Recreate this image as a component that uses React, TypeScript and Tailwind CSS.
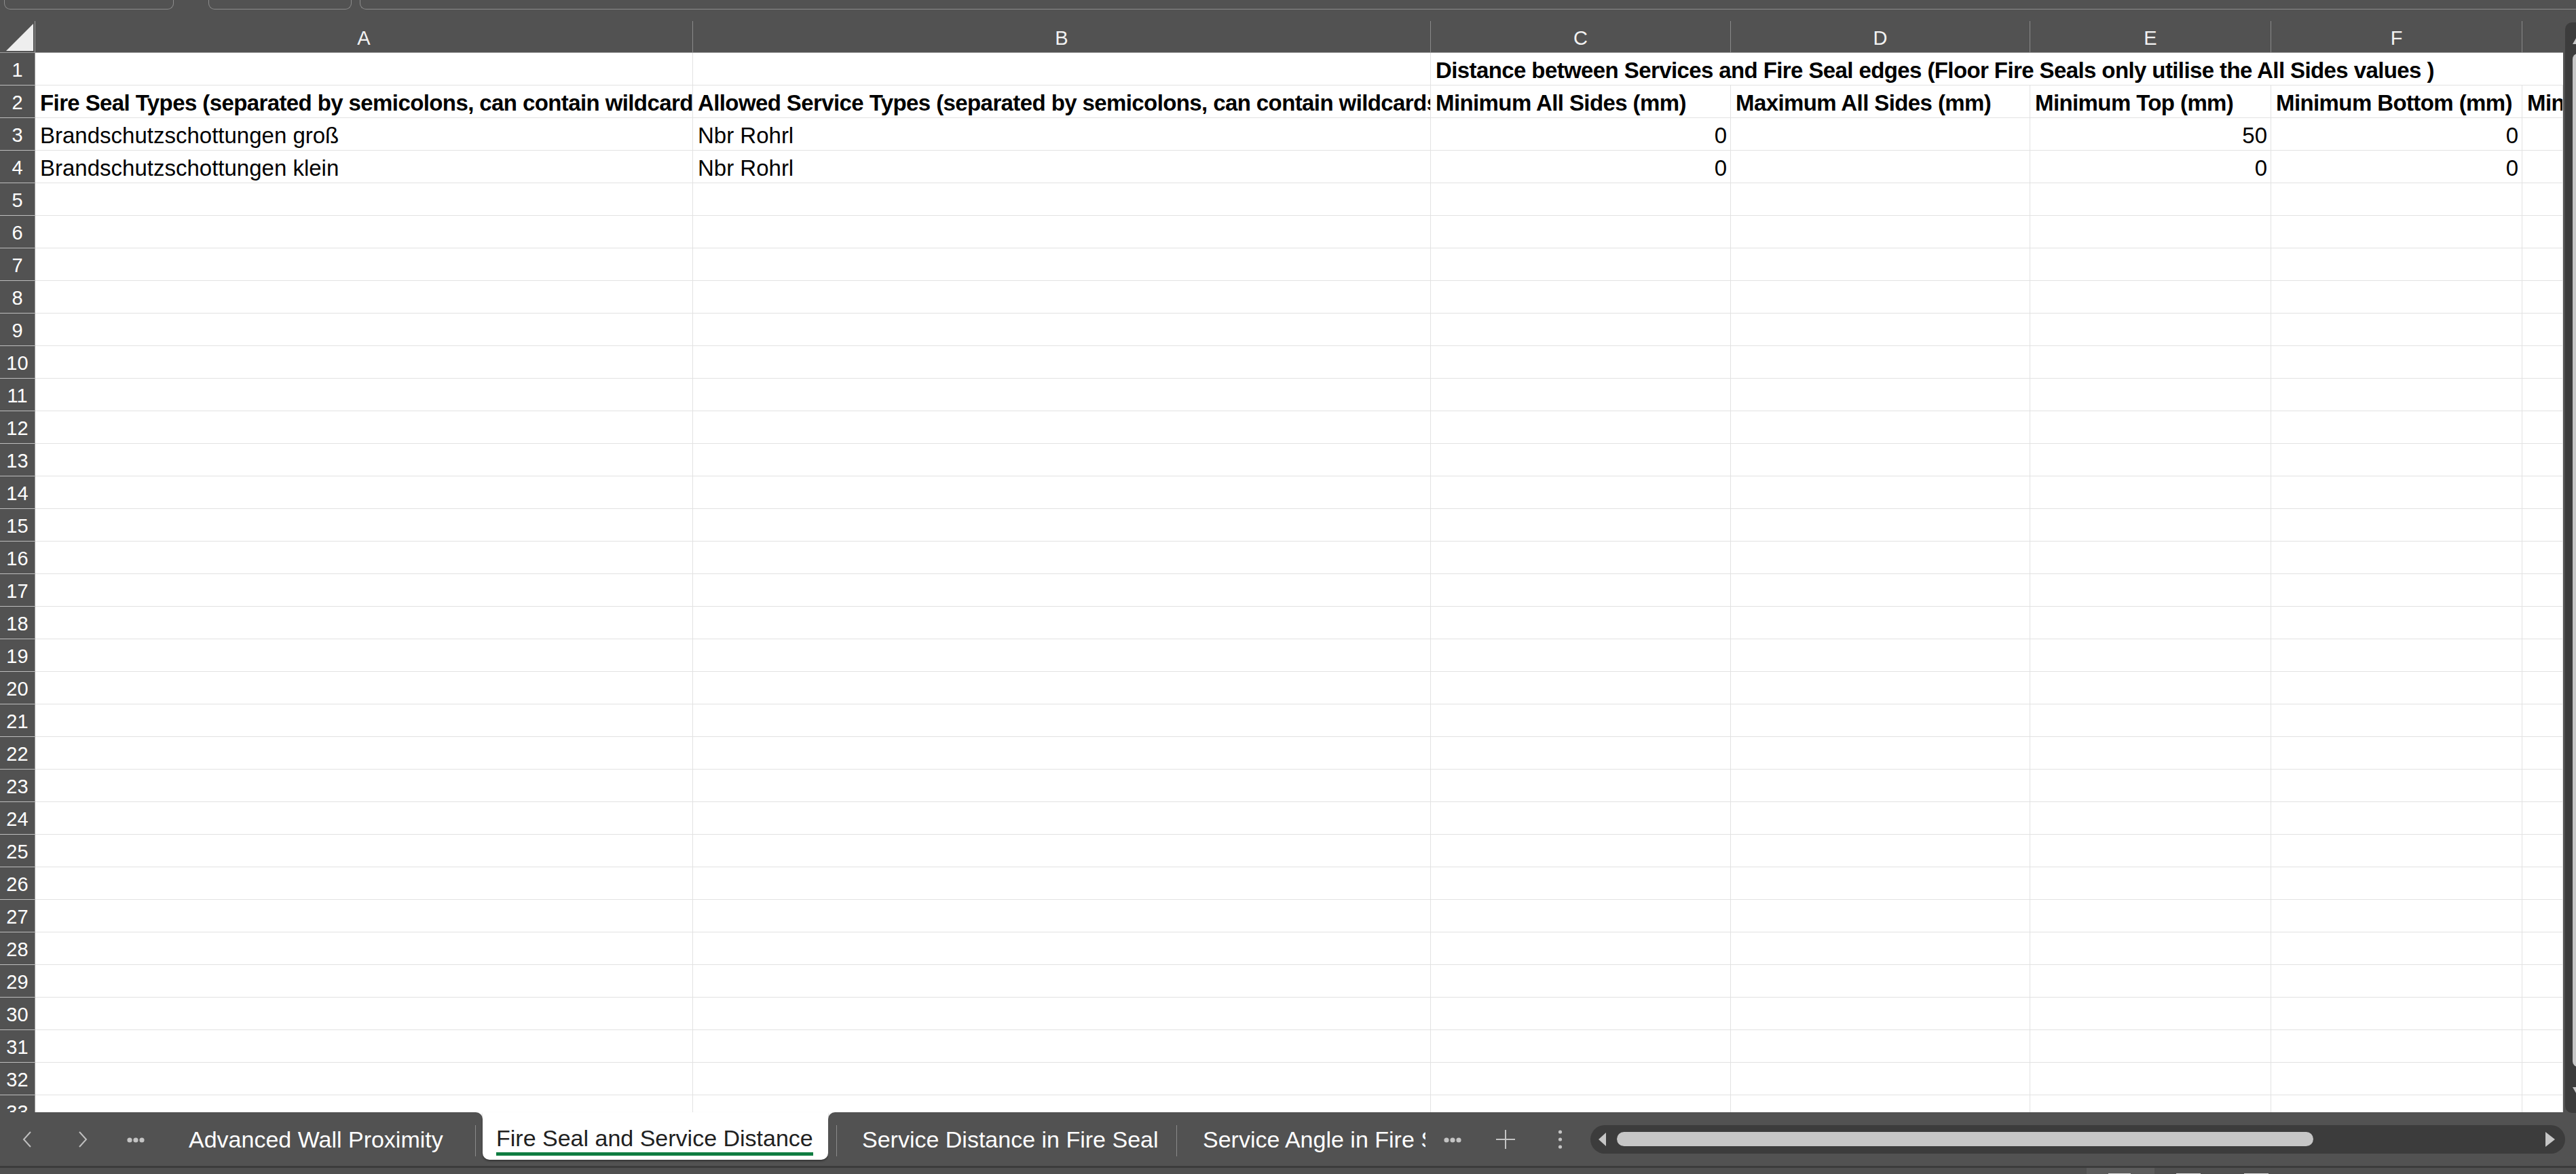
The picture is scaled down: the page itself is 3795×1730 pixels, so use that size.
import React from "react";

const COLS = [969, 1087, 442, 441, 355, 370];
const LETTERS = ["A", "B", "C", "D", "E", "F"];
const ROWS = 33;

type CellProps = { w?: number; children?: React.ReactNode; bold?: boolean; right?: boolean; grow?: boolean };

function Cell({ w, children, bold, right, grow }: CellProps) {
  return (
    <div
      style={grow ? undefined : { width: w }}
      className={`${grow ? "flex-1 min-w-0" : "shrink-0"} h-full border-r border-b border-[#e2e2e2] overflow-hidden whitespace-nowrap flex items-center pt-[5px] px-[7px] text-[33px] text-black ${bold ? "font-bold tracking-[-0.6px]" : ""} ${right ? "justify-end pr-[5px]" : ""}`}
    >
      {children}
    </div>
  );
}

function RowHeader({ n }: { n: number }) {
  return (
    <div className="w-[52px] shrink-0 h-full bg-[#525252] border-r border-[#9a9a9a] border-b border-b-[#bdbdbd] flex items-center justify-center pt-[5px] text-[29px] text-white">
      {n}
    </div>
  );
}

function Row({ n }: { n: number }) {
  let cells: React.ReactNode;
  if (n === 1) {
    cells = (
      <>
        <Cell w={COLS[0]} />
        <Cell w={COLS[1]} />
        <div className="flex-1 min-w-0 h-full border-b border-[#e2e2e2] overflow-hidden whitespace-nowrap flex items-center pt-[5px] px-[7px] text-[33px] font-bold tracking-[-0.6px] text-black">
          Distance between Services and Fire Seal edges (Floor Fire Seals only utilise the All Sides values )
        </div>
      </>
    );
  } else if (n === 2) {
    cells = (
      <>
        <Cell w={COLS[0]} bold>Fire Seal Types (separated by semicolons, can contain wildcards)</Cell>
        <Cell w={COLS[1]} bold>Allowed Service Types (separated by semicolons, can contain wildcards)</Cell>
        <Cell w={COLS[2]} bold>Minimum All Sides (mm)</Cell>
        <Cell w={COLS[3]} bold>Maximum All Sides (mm)</Cell>
        <Cell w={COLS[4]} bold>Minimum Top (mm)</Cell>
        <Cell w={COLS[5]} bold>Minimum Bottom (mm)</Cell>
        <Cell grow bold>Minimum Left (mm)</Cell>
      </>
    );
  } else if (n === 3 || n === 4) {
    cells = (
      <>
        <Cell w={COLS[0]}>{n === 3 ? "Brandschutzschottungen groß" : "Brandschutzschottungen klein"}</Cell>
        <Cell w={COLS[1]}>Nbr Rohrl</Cell>
        <Cell w={COLS[2]} right>0</Cell>
        <Cell w={COLS[3]} />
        <Cell w={COLS[4]} right>{n === 3 ? "50" : "0"}</Cell>
        <Cell w={COLS[5]} right>0</Cell>
        <Cell grow />
      </>
    );
  } else {
    cells = (
      <>
        {COLS.map((w, i) => (
          <Cell key={i} w={w} />
        ))}
        <Cell grow />
      </>
    );
  }
  return (
    <div className="flex h-[48px] shrink-0">
      <RowHeader n={n} />
      {cells}
    </div>
  );
}

function ChevronLeft() {
  return (
    <svg width="14" height="24" viewBox="0 0 14 24" className="shrink-0">
      <polyline points="12,1 2,12 12,23" fill="none" stroke="#bfbfbf" strokeWidth="2" />
    </svg>
  );
}
function ChevronRight() {
  return (
    <svg width="14" height="24" viewBox="0 0 14 24" className="shrink-0">
      <polyline points="2,1 12,12 2,23" fill="none" stroke="#bfbfbf" strokeWidth="2" />
    </svg>
  );
}
function Dots() {
  return (
    <svg width="26" height="10" viewBox="0 0 26 10" className="shrink-0">
      <circle cx="4" cy="5" r="3.6" fill="#c4c4c4" />
      <circle cx="13" cy="5" r="3.6" fill="#c4c4c4" />
      <circle cx="22" cy="5" r="3.6" fill="#c4c4c4" />
    </svg>
  );
}

export default function App() {
  return (
    <div className="w-[3795px] h-[1730px] overflow-hidden bg-[#525252] font-['Liberation_Sans',Arial,sans-serif] flex flex-col">
      {/* top strip (formula bar remnants) */}
      <div className="h-[31px] shrink-0 flex items-start bg-[#525252]">
        <div className="ml-[6px] w-[250px] h-[14px] border border-t-0 border-[#8c8c8c] rounded-b-[9px]" />
        <div className="ml-[51px] w-[211px] h-[14px] border border-t-0 border-[#8c8c8c] rounded-b-[9px]" />
        <div className="ml-[12px] flex-1 h-[14px] border border-t-0 border-r-0 border-[#8c8c8c] rounded-bl-[9px]" />
      </div>

      {/* main area */}
      <div className="h-[1608px] shrink-0 flex">
        <div className="w-[3776px] shrink-0 h-full overflow-hidden bg-white flex flex-col">
          {/* column headers */}
          <div className="flex h-[47px] shrink-0 bg-[#525252] border-b border-[#a0a0a0]">
            <div className="w-[52px] shrink-0 h-full border-r border-[#9a9a9a] relative">
              <svg width="52" height="47" viewBox="0 0 52 47" className="block">
                <polygon points="49,4 49,44 9,44" fill="#eeeeee" />
              </svg>
            </div>
            {COLS.map((w, i) => (
              <div
                key={i}
                style={{ width: w }}
                className="shrink-0 h-full border-r border-[#8a8a8a] flex items-center justify-center pt-[5px] text-[29px] text-[#f2f2f2]"
              >
                {LETTERS[i]}
              </div>
            ))}
            <div className="flex-1 h-full flex items-center justify-center pt-[5px] text-[29px] text-[#f2f2f2]" />
          </div>
          {Array.from({ length: ROWS }, (_, i) => (
            <Row key={i} n={i + 1} />
          ))}
        </div>
        {/* vertical scrollbar */}
        <div className="flex-1 ml-[3px] mt-[2px] h-[1607px] bg-[#3c3c3c] rounded-tl-[10px] rounded-bl-[10px] flex flex-col relative">
          <svg width="8" height="14" viewBox="0 0 8 14" className="ml-[11px] mt-[18px] shrink-0">
            <polygon points="0,14 8,0 8,14" fill="#c6c6c6" />
          </svg>
          <div className="ml-[11px] mt-[14px] h-[1493px] bg-[#c6c6c6] rounded-tl-[8px] rounded-bl-[8px]" />
          <svg width="8" height="14" viewBox="0 0 8 14" className="ml-[11px] mt-[30px] shrink-0">
            <polygon points="0,0 8,0 8,14" fill="#c6c6c6" />
          </svg>
        </div>
      </div>

      {/* sheet tabs bar */}
      <div className="h-[79px] shrink-0 flex bg-white">
        <div className="w-[711px] shrink-0 h-full bg-[#525252] rounded-tr-[10px] flex items-center">
          <div className="ml-[33px]">
            <ChevronLeft />
          </div>
          <div className="ml-[68px]">
            <ChevronRight />
          </div>
          <div className="ml-[58px] pt-[2px]">
            <Dots />
          </div>
          <div className="ml-[65px] w-[422px] shrink-0 whitespace-nowrap text-[34px] text-white pt-[2px]">
            Advanced Wall Proximity
          </div>
          <div className="w-px h-[46px] bg-[#8a8a8a] shrink-0 mt-[4px]" />
        </div>
        <div className="w-[509px] shrink-0 h-full bg-[#525252]">
          <div className="h-[70px] bg-white rounded-b-[10px] shadow-[0_2px_3px_rgba(0,0,0,0.35)] pl-[20px] pt-[19px]">
            <div className="inline-flex flex-col">
              <span className="text-[34px] leading-[38px] text-[#212121] whitespace-nowrap">Fire Seal and Service Distance</span>
              <span className="h-[5px] bg-[#107c41] mt-[2px]" />
            </div>
          </div>
        </div>
        <div className="flex-1 h-full bg-[#525252] rounded-tl-[10px] flex items-center">
          <div className="ml-[12px] w-px h-[46px] bg-[#8a8a8a] shrink-0 mt-[4px]" />
          <div className="ml-[37px] w-[463px] shrink-0 whitespace-nowrap text-[34px] text-white pt-[2px]">
            Service Distance in Fire Seal
          </div>
          <div className="w-px h-[46px] bg-[#8a8a8a] shrink-0 mt-[4px]" />
          <div className="ml-[38px] w-[328px] shrink-0 overflow-hidden whitespace-nowrap text-[34px] text-white pt-[2px]">
            Service Angle in Fire Seal
          </div>
          <div className="ml-[27px] pt-[2px]">
            <Dots />
          </div>
          <svg width="30" height="30" viewBox="0 0 30 30" className="ml-[50px] shrink-0">
            <line x1="15" y1="1" x2="15" y2="29" stroke="#c4c4c4" strokeWidth="2" />
            <line x1="1" y1="15" x2="29" y2="15" stroke="#c4c4c4" strokeWidth="2" />
          </svg>
          <svg width="11" height="30" viewBox="0 0 11 30" className="ml-[60px] shrink-0">
            <circle cx="5.5" cy="4" r="2.6" fill="#c4c4c4" />
            <circle cx="5.5" cy="15" r="2.6" fill="#c4c4c4" />
            <circle cx="5.5" cy="26" r="2.6" fill="#c4c4c4" />
          </svg>
          <div className="ml-[39px] w-[1436px] h-[42px] shrink-0 bg-[#3c3c3c] rounded-full flex items-center">
            <svg width="14" height="20" viewBox="0 0 14 20" className="ml-[10px] shrink-0">
              <polygon points="13,0 13,20 2,10" fill="#c6c6c6" />
            </svg>
            <div className="ml-[15px] w-[1026px] h-[21px] bg-[#c6c6c6] rounded-full" />
            <svg width="16" height="22" viewBox="0 0 16 22" className="ml-[341px] shrink-0">
              <polygon points="1,0 1,22 15,11" fill="#c6c6c6" />
            </svg>
          </div>
        </div>
      </div>
      <div className="h-[3px] shrink-0 bg-[#3c3c3c]" />
      {/* status bar */}
      <div className="flex-1 bg-[#505050] flex">
        <div className="ml-[3074px] w-[100px] h-full bg-[#5c5c5c] relative flex">
          <div className="ml-[32px] mt-[8px] w-[33px] h-[3px] bg-[#d9d9d9]" />
        </div>
        <div className="ml-[32px] mt-[8px] w-[36px] h-[3px] bg-[#d9d9d9]" />
        <div className="ml-[64px] mt-[8px] w-[36px] h-[3px] bg-[#d9d9d9]" />
      </div>
    </div>
  );
}
